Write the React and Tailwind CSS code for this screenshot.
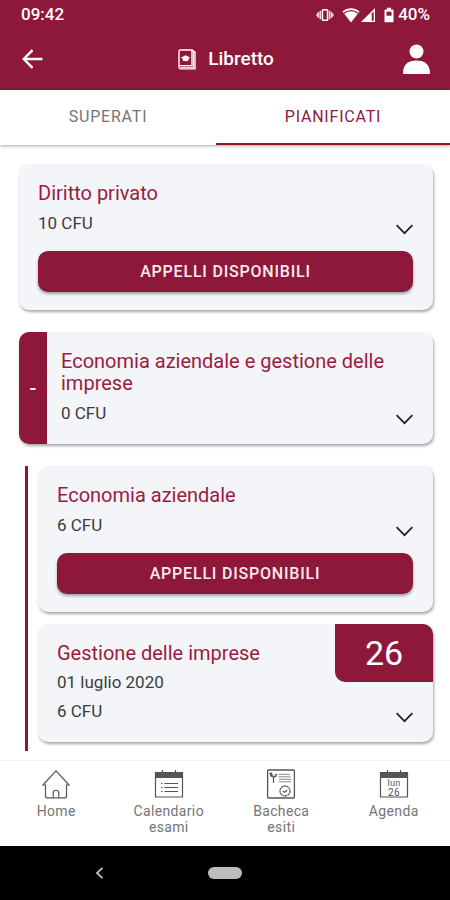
import React, { useState } from 'react';

const exams = {
  single: { title: 'Diritto privato', cfu: 10, bookable: true },
  parent: { title: 'Economia aziendale e gestione delle imprese', cfu: 0, mark: '-' },
  modules: [
    { title: 'Economia aziendale', cfu: 6, bookable: true },
    { title: 'Gestione delle imprese', date: '01 luglio 2020', cfu: 6, grade: 26 },
  ],
};

const StatusBar = () => (
  <div className="flex h-[30px] items-center justify-between pl-[21px] pr-5 text-[17px] font-medium">
    <span>09:42</span>
    <div className="flex items-center gap-2">
      <svg className="h-4 w-[18px]" viewBox="0 0 18 16" fill="currentColor">
        <path d="M0 8l2.200-3h1v6h-1zM18 8l-2.200-3h-1v6h1zM3.600 3.800h1.400v8.400H3.600zM13 3.800h1.400v8.400H13z" opacity="0.8" />
        <rect x="6.400" y="2.700" width="5.200" height="10.600" rx="0.800" fill="none" stroke="currentColor" strokeWidth="1.600" />
      </svg>
      <div className="flex items-center">
        <svg className="h-4 w-[18px]" viewBox="0 0 18 16" fill="currentColor">
          <path d="M9 15.500L.500 4.500C5.500.200 12.500.200 17.500 4.500z" />
          <path d="M2 6.200c4.300-3.200 9.700-3.200 14 0" fill="none" stroke="#8e1839" strokeWidth="1.100" />
        </svg>
        <svg className="h-4 w-4" viewBox="0 0 16 16">
          <path d="M1 15L15 1v14z" fill="currentColor" />
          <path d="M11.700 6.500L13.700 4.500v9.200h-2z" fill="#8e1839" />
        </svg>
      </div>
      <div className="flex items-center gap-1">
        <svg className="h-4 w-[10px]" viewBox="0 0 10 16">
          <path d="M3 .800h4v1.700h1.600c.500 0 .900.400.900.900v11c0 .500-.400.900-.900.900H1.400c-.500 0-.900-.400-.900-.900v-11c0-.500.400-.900.900-.900H3z" fill="currentColor" />
          <path d="M2.500 4.700h5v4h-5z" fill="#8e1839" />
        </svg>
        <span>40%</span>
      </div>
    </div>
  </div>
);

const Header = () => (
  <header className="bg-[#8e1839] text-white">
    <StatusBar />
    <div className="flex h-[60px] items-center justify-between pb-[2px] pl-[22px] pr-5">
      <button type="button" aria-label="Indietro" className="w-[27px]">
        <svg className="h-5 w-[21px]" viewBox="0 0 21 20" fill="none" stroke="currentColor" strokeWidth="2.400">
          <path d="M20.500 10H2M10.500 1.200L1.800 10l8.700 8.800" />
        </svg>
      </button>
      <div className="flex items-center gap-3">
        <svg className="h-[21px] w-[18px]" viewBox="0 0 18 21" fill="none" stroke="currentColor">
          <path d="M1 17.500V2.500C1 1.500 1.600 1 2.500 1H14v15.600H2.500c-2 0-2 3.300 0 3.300H17V3.200L14 1" strokeWidth="1.400" />
          <path d="M15.600 3v15.500M2.500 18.300h13" strokeWidth="1" />
          <path d="M2.800 8.800L7.600 6.200l4.700 2.600-1.800 1v1.600c-1.500 1-4.300 1-5.800 0V9.800z" fill="currentColor" stroke="none" />
        </svg>
        <h1 className="text-[19px] font-medium">Libretto</h1>
      </div>
      <button type="button" aria-label="Profilo">
        <svg className="h-[30px] w-[27px]" viewBox="0 0 27 30" fill="currentColor">
          <circle cx="13.500" cy="7.500" r="7" />
          <path d="M0 29c0-8 5-12.500 13.500-12.500S27 21 27 29c0 .600-.300.900-.900.900H.900c-.600 0-.900-.300-.900-.900z" />
        </svg>
      </button>
    </div>
  </header>
);

const Tabs = ({ tab, setTab }) => (
  <div className="flex h-[55px] bg-white text-base tracking-wider shadow-[0_1px_3px_rgba(0,0,0,0.35)]">
    <button
      type="button"
      onClick={() => setTab('superati')}
      className={`w-[48%] border-b-2 ${tab === 'superati' ? 'border-[#8e1820] text-[#8e1839]' : 'border-transparent text-[#757575]'}`}
    >
      SUPERATI
    </button>
    <button
      type="button"
      onClick={() => setTab('pianificati')}
      className={`flex-1 border-b-2 ${tab === 'pianificati' ? 'border-[#8e1820] text-[#8e1839]' : 'border-transparent text-[#757575]'}`}
    >
      PIANIFICATI
    </button>
  </div>
);

const ExamCard = ({ exam }) => (
  <article className="relative flex overflow-hidden rounded-[10px] bg-[#f3f5f9] shadow-[1px_2px_3px_rgba(0,0,0,0.35)]">
    {exam.mark && (
      <div className="flex w-7 shrink-0 items-center justify-center bg-[#8e1839] text-xl font-medium text-white">
        {exam.mark}
      </div>
    )}
    <div className={`flex-1 py-[18px] pr-5 ${exam.mark ? 'pl-[14px]' : 'pl-[19px]'}`}>
      <h2 className="text-xl leading-[22px] text-[#9c1c40]">{exam.title}</h2>
      {exam.date && <p className="mt-2 text-[17px] leading-5 text-[#3c3c3c]">{exam.date}</p>}
      <div className="mt-2 flex h-6 items-start justify-between">
        <p className="text-[17px] leading-[22px] text-[#3c3c3c]">{exam.cfu} CFU</p>
        <button type="button" aria-label="Mostra dettagli" className="self-end">
          <svg className="h-3 w-[17px]" viewBox="0 0 17 12" fill="none" stroke="#222" strokeWidth="1.700">
            <path d="M.600 1.200l7.900 8 7.900-8" />
          </svg>
        </button>
      </div>
      {exam.bookable && (
        <button
          type="button"
          className="mt-[15px] h-[41px] w-full rounded-[10px] bg-[#8e1839] text-base font-medium tracking-wider text-[#fbe9ee] shadow-[0_2px_3px_rgba(0,0,0,0.35)]"
        >
          APPELLI DISPONIBILI
        </button>
      )}
    </div>
    {exam.grade && (
      <div className="absolute right-0 top-0 flex h-[58px] w-[98px] items-center justify-center rounded-bl-[10px] bg-[#8e1839] text-[34px] text-white">
        {exam.grade}
      </div>
    )}
  </article>
);

const HomeIcon = () => (
  <svg className="h-[30px] w-[30px]" viewBox="0 0 30 30" fill="none" stroke="#555" strokeWidth="1.200">
    <path d="M4.500 16H2L15 1.800 28 16h-2.500v11.500c0 .800-.500 1.300-1.300 1.300H5.800c-.800 0-1.300-.500-1.300-1.300z" />
    <path d="M12.200 28.500v-4.700c0-3.400 5.600-3.400 5.600 0v4.700" />
  </svg>
);

const CalendarIcon = ({ children }) => (
  <svg className="h-[30px] w-[30px]" viewBox="0 0 30 30" fill="none" stroke="#555">
    <path d="M1.500 3.500h27v24.500h-27z" strokeWidth="1.200" />
    <path d="M1 3h28v6H1z" fill="#555" stroke="none" />
    <path d="M8.500 1v3M21.500 1v3" strokeWidth="1.200" />
    {children}
  </svg>
);

const ExamCalendarIcon = () => (
  <CalendarIcon>
    <path d="M7 14.500h1.500M7 18.500h1.500M7 22.500h1.500M10.500 14.500H24M10.500 18.500H24M10.500 22.500H24" strokeWidth="1.200" />
  </CalendarIcon>
);

const AgendaIcon = () => (
  <CalendarIcon>
    <text x="15" y="17" textAnchor="middle" fontSize="9" fill="#555" stroke="none">lun</text>
    <text x="15" y="27" textAnchor="middle" fontSize="10" fill="#555" stroke="none">26</text>
  </CalendarIcon>
);

const BoardIcon = () => (
  <svg className="h-[30px] w-[30px]" viewBox="0 0 30 30" fill="none" stroke="#555">
    <rect x="1.600" y="1" width="26.800" height="28" rx="1" strokeWidth="1.300" />
    <path d="M7.500 14V8M3.500 4l4 4.500L11 5M5 3.500l1.500 3M4 6.500l3.500 1.800L10.500 7" strokeWidth="1.200" />
    <path d="M12.500 5.300H24M12.500 7.800h12M13 10.300h12M13 12.800h12" strokeWidth="1" opacity="0.700" />
    <circle cx="19" cy="22" r="5" strokeWidth="1.300" strokeDasharray="2.200 0.500" />
    <path d="M16.800 21.800l1.600 1.400 2.800-2" strokeWidth="1.100" />
  </svg>
);

const navItems = [
  { label: 'Home', Icon: HomeIcon },
  { label: 'Calendario esami', Icon: ExamCalendarIcon },
  { label: 'Bacheca esiti', Icon: BoardIcon },
  { label: 'Agenda', Icon: AgendaIcon },
];

const BottomNav = () => (
  <nav className="grid h-[86px] grid-cols-4 border-t border-[#f2f2f2] bg-white pt-2">
    {navItems.map(({ label, Icon }) => (
      <a key={label} href="#" className="flex flex-col items-center gap-1 px-4 text-center text-sm leading-4 tracking-wide text-[#757575]">
        <Icon />
        {label}
      </a>
    ))}
  </nav>
);

const SystemBar = () => (
  <div className="grid h-[54px] grid-cols-[1fr_34px_1fr] items-center bg-black">
    <button type="button" aria-label="Indietro" className="justify-self-center pr-2">
      <svg className="h-3 w-4" viewBox="0 0 16 12" fill="none" stroke="#c4c4c4" strokeWidth="1.800">
        <path d="M10.500.800L5 6l5.500 5.200" />
      </svg>
    </button>
    <button type="button" aria-label="Schermata principale" className="h-3 rounded-full bg-[#bdbdbd]" />
  </div>
);

const App = () => {
  const [tab, setTab] = useState('pianificati');

  return (
    <div className="flex min-h-screen flex-col bg-white font-['Roboto',sans-serif]">
      <Header />
      <Tabs tab={tab} setTab={setTab} />
      <main className="flex flex-1 flex-col gap-[22px] pb-[9px] pl-[19px] pr-[17px] pt-[19px]">
        <ExamCard exam={exams.single} />
        <ExamCard exam={exams.parent} />
        <div className="ml-[6px] flex flex-col gap-3 border-l-[3px] border-[#8e1833] pb-[9px] pl-[10px]">
          {exams.modules.map((exam) => (
            <ExamCard key={exam.title} exam={exam} />
          ))}
        </div>
      </main>
      <BottomNav />
      <SystemBar />
    </div>
  );
};

export default App;
